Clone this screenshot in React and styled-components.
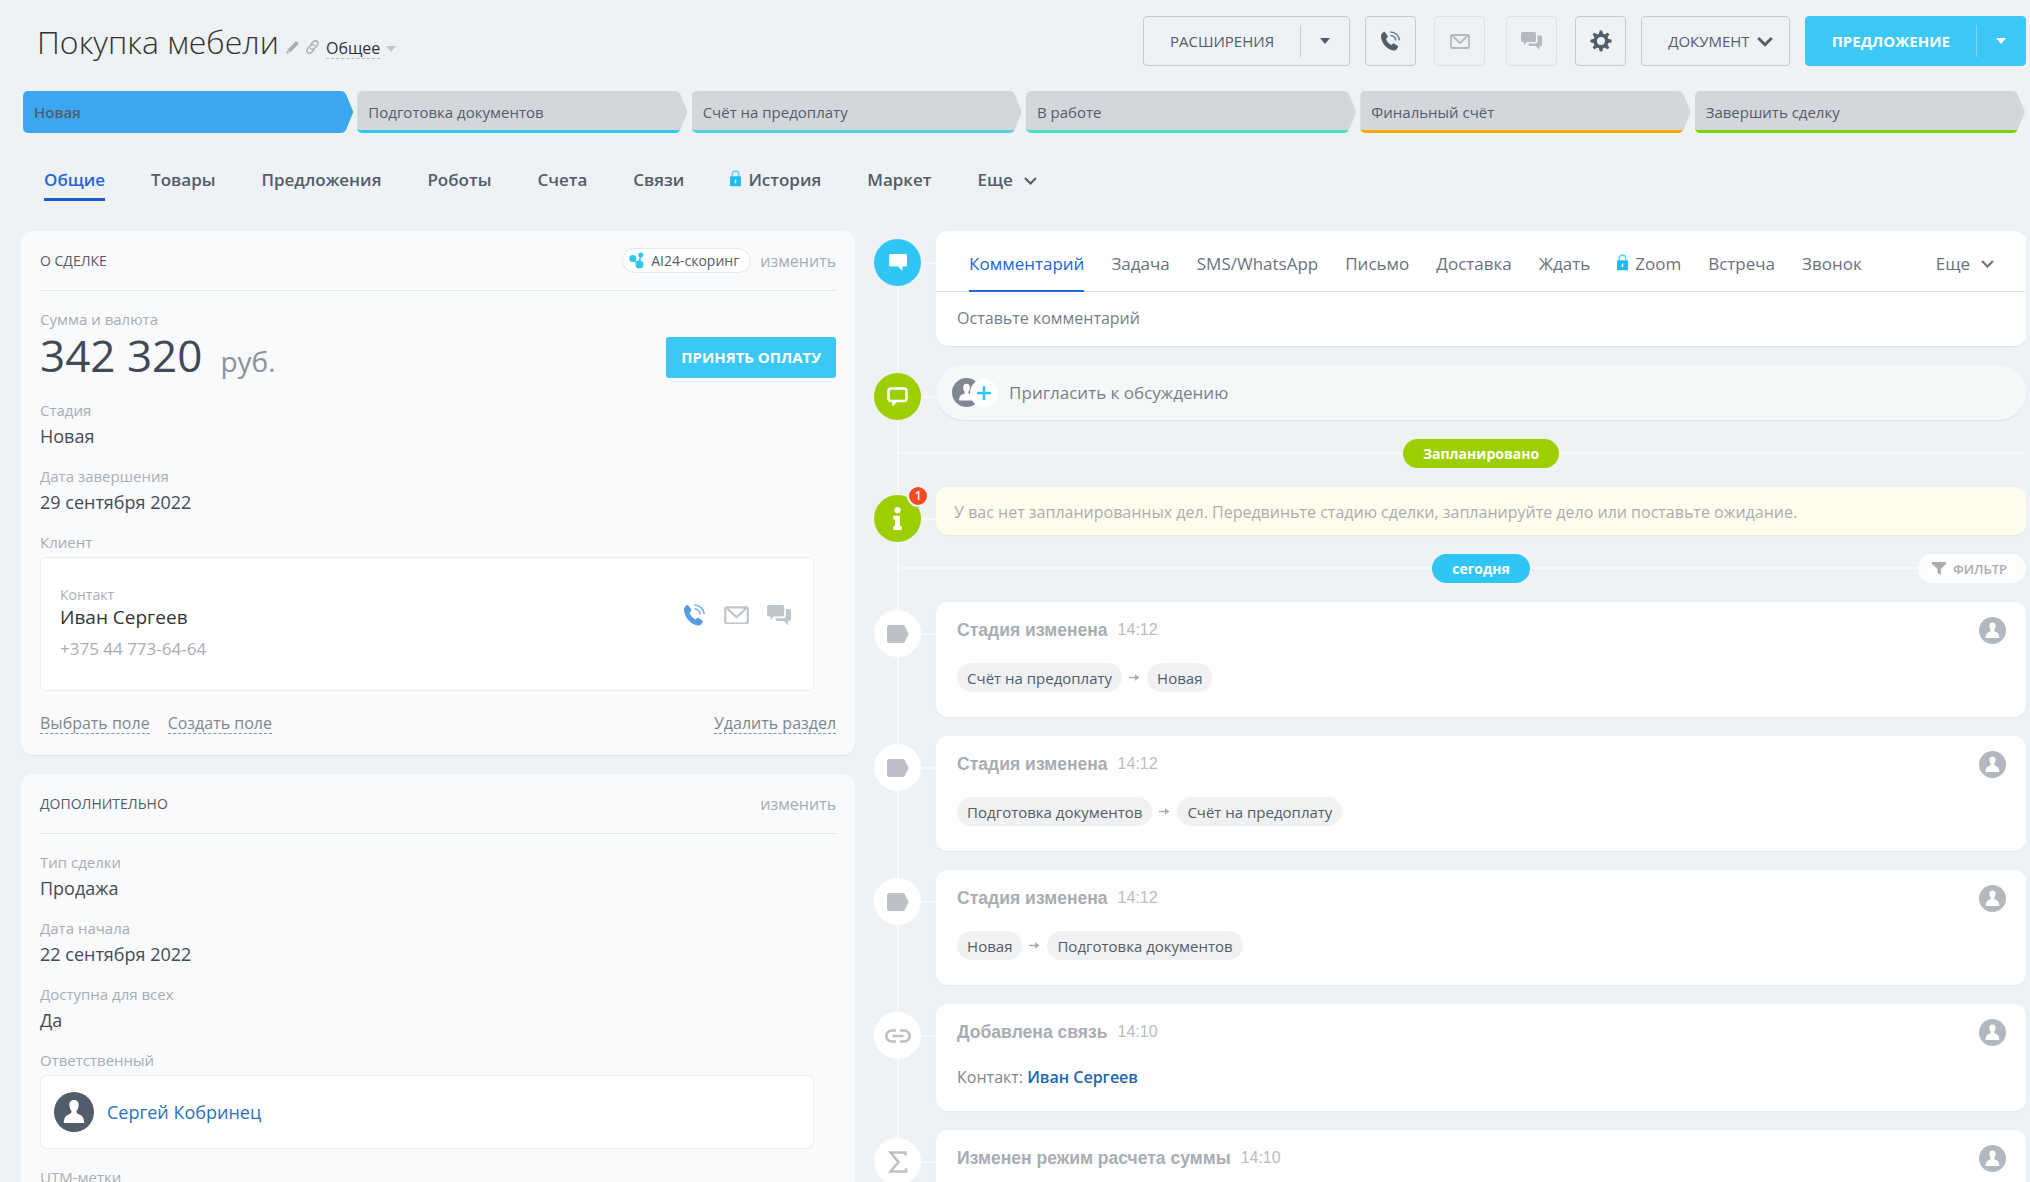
import React from 'react';
import styled, { createGlobalStyle, css } from 'styled-components';
import { FaInfo } from 'react-icons/fa';

const GlobalStyle = createGlobalStyle`
    * {
        box-sizing: border-box;
    }
    body {
        margin: 0;
        background: #eef2f4;
        color: #535c69;
        font-family: "Open Sans", "Noto Sans", sans-serif;
    }
    button, input {
        margin: 0;
        padding: 0;
        border: 0;
        background: none;
        font-family: inherit;
        color: inherit;
    }
    button {
        cursor: pointer;
    }
    a {
        color: inherit;
        text-decoration: none;
    }
    h1, h2, h3, p, ol, ul, dl, dd {
        margin: 0;
        padding: 0;
        list-style: none;
        font-weight: inherit;
    }
    svg {
        display: block;
        flex: none;
    }
`

const Page = styled.div`
    height: 100vh;
    overflow: hidden;
    padding: 16px 4px 0 21px;
`

/* header */

const Header = styled.header`
    display: flex;
    align-items: center;
    justify-content: space-between;
    height: 50px;
`

const TitleRow = styled.div`
    display: flex;
    align-items: baseline;
    gap: 7px;
    padding: 2px 0 0 16px;
`

const Title = styled.h1`
    font-size: 32px;
    line-height: 44px;
    font-weight: 300;
    color: #333;
`

const CategoryButton = styled.button`
    display: flex;
    align-items: center;
    gap: 6px;
    font-size: 16px;
    line-height: 20px;
    color: #333;
    & > span {
        border-bottom: 1px dashed #b5bac0;
    }
`

const Toolbar = styled.div`
    display: flex;
    gap: 15px;
`

const Button = styled.button`
    display: flex;
    align-items: center;
    justify-content: center;
    height: 50px;
    border: 1px solid #c6cbd0;
    border-radius: 4px;
    font-size: 15px;
    font-weight: 500;
    ${({ $primary }) => $primary && css`
        border-color: #3bc8f5;
        background: #3bc8f5;
        color: #fff;
        font-weight: 700;
    `}
    ${({ $wide }) => $wide && css`
        gap: 7px;
        padding: 0 16px 0 26px;
    `}
`

const IconButton = styled(Button)`
    width: 51px;
    &:disabled {
        margin: 0 3px;
        border-color: #dde1e4;
        color: #b5bac0;
    }
`

const SplitLabel = styled.span`
    padding: 0 26px;
`

const SplitArrow = styled.span`
    display: flex;
    align-items: center;
    justify-content: center;
    width: 49px;
    height: 32px;
    border-left: 1px solid ${({ $light }) => ($light ? '#7cdaf8' : '#c6cbd0')};
`

/* stages */

const Stages = styled.ol`
    display: grid;
    grid-template-columns: repeat(6, 1fr);
    gap: 4px;
    margin-top: 25px;
    padding: 0 1px 0 2px;
`

const Stage = styled.button`
    width: 100%;
    height: 42px;
    padding: 2px 11px 0;
    border-bottom: 3px solid ${({ $color }) => $color};
    border-radius: 5px 0 0 5px;
    background: ${({ $active, $color }) => ($active ? $color : '#d3d7dc')};
    clip-path: polygon(0 0, calc(100% - 12px) 0, calc(100% - 9px) 1px, calc(100% - 7px) 4px, 100% 50%, calc(100% - 7px) 38px, calc(100% - 9px) 41px, calc(100% - 12px) 100%, 0 100%);
    font-size: 15px;
    font-weight: ${({ $active }) => ($active ? 600 : 500)};
    text-align: left;
`

/* page tabs */

const Tabs = styled.nav`
    display: flex;
    gap: 46px;
    margin: 35px 0 30px;
    padding-left: 23px;
`

const Tab = styled.a`
    display: flex;
    align-items: center;
    gap: ${({ $more }) => ($more ? 11 : 7)}px;
    padding-bottom: 6px;
    border-bottom: 3px solid ${({ $active }) => ($active ? '#1b5ccd' : 'transparent')};
    color: ${({ $active }) => ($active ? '#2067d9' : '#535c69')};
    font-size: 17px;
    line-height: 24px;
    font-weight: 600;
`

const Columns = styled.main`
    display: grid;
    grid-template-columns: 42fr 58fr;
    gap: 19px;
    align-items: start;
`

const Sections = styled.div`
    display: flex;
    flex-direction: column;
    gap: 19px;
`

/* deal sections */

const Section = styled.section`
    padding: 0 19px 21px;
    border-radius: 12px;
    background: #f9fafc;
    box-shadow: 0 1px 1px rgba(83, 92, 105, .08);
`

const SectionHead = styled.div`
    display: flex;
    align-items: center;
    gap: 9px;
    height: 60px;
    border-bottom: 1px solid #e2e5e8;
`

const SectionTitle = styled.h2`
    flex: 1;
    font-size: 14px;
    font-weight: 500;
`

const EditButton = styled.button`
    font-size: 16px;
    line-height: 20px;
    color: #a8adb4;
`

const Scoring = styled.a`
    display: flex;
    align-items: center;
    gap: 7px;
    height: 25px;
    padding: 0 11px 0 6px;
    border: 1px solid #e4e7ea;
    border-radius: 13px;
    background: #fff;
    font-size: 14px;
    font-weight: 500;
`

const Fields = styled.dl`
    display: flex;
    flex-direction: column;
    gap: 18px;
    padding-top: 18px;
`

const Field = styled.div`
    display: flex;
    flex-direction: column;
    gap: 4px;
`

const FieldLabel = styled.dt`
    font-size: ${({ $small }) => ($small ? 14 : 15)}px;
    line-height: 20px;
    color: #a8adb4;
`

const FieldValue = styled.dd`
    font-size: 18px;
    line-height: 24px;
    color: #444b57;
`

const SumRow = styled.dd`
    display: flex;
    align-items: center;
    justify-content: space-between;
    height: 49px;
`

const Sum = styled.span`
    font-size: 44px;
    line-height: 48px;
    color: #414955;
    & > small {
        margin-left: 18px;
        font-size: 28px;
        color: #8b929b;
    }
`

const PayButton = styled.button`
    height: 41px;
    padding: 0 15px 2px;
    border-radius: 3px;
    background: #3bc8f5;
    color: #fff;
    font-size: 15px;
    font-weight: 700;
`

const Box = styled.dd`
    display: flex;
    align-items: center;
    margin: 1px 22px 0 0;
    border: 1px solid #e9edef;
    border-radius: 6px;
    background: #fff;
`

const ContactBox = styled(Box)`
    justify-content: space-between;
    padding: 27px 22px 31px 19px;
`

const ContactActions = styled.div`
    display: flex;
    align-items: center;
    gap: 18px;
    margin-bottom: 14px;
    color: #c0c5ca;
`

const CallButton = styled.button`
    color: #569de0;
`

const ContactName = styled.a`
    display: block;
    font-size: 19px;
    line-height: 24px;
    color: #333;
`

const Phone = styled.p`
    margin-top: 10px;
    font-size: 17px;
    line-height: 20px;
    font-weight: 500;
    color: #a8adb4;
`

const UserBox = styled(Box)`
    gap: 13px;
    padding: 16px 13px;
    font-size: 18px;
    color: #2a72bd;
`

const SectionLinks = styled.div`
    display: flex;
    gap: 18px;
    margin-top: 22px;
`

const DashedButton = styled.button`
    border-bottom: 1px dashed #8b929b;
    font-size: 16px;
    line-height: 20px;
    color: #80868e;
    &:last-child {
        margin-left: auto;
    }
`

/* timeline */

const Timeline = styled.div`
    display: flex;
    flex-direction: column;
    gap: 19px;
    background: linear-gradient(#f7f9fa, #f7f9fa) 23px 10px / 2px 100% no-repeat;
`

const Entry = styled.div`
    display: grid;
    grid-template-columns: 47px 1fr;
    gap: 15px;
    align-items: start;
    background: linear-gradient(#f7f9fa, #f7f9fa) 24px 31px / 46px 2px no-repeat;
`

const Marker = styled.div`
    position: relative;
    display: flex;
    align-items: center;
    justify-content: center;
    height: 47px;
    margin: 8px 0 -8px;
    border-radius: 50%;
    background: ${({ $color }) => $color || '#fff'};
    color: ${({ $color }) => ($color ? '#fff' : '#bcc0c7')};
`

const Counter = styled.span`
    position: absolute;
    top: -10px;
    right: -8px;
    width: 22px;
    height: 22px;
    border: 2px solid #eef2f4;
    border-radius: 50%;
    background: #fb4b1e;
    color: #fff;
    font-size: 12px;
    line-height: 18px;
    font-weight: 600;
    text-align: center;
`

const Divider = styled.div`
    display: grid;
    grid-template-columns: 1fr auto 1fr;
    align-items: center;
    padding-left: 62px;
    background: linear-gradient(#f7f9fa, #f7f9fa) 24px 13px / 100% 2px no-repeat;
`

const Pill = styled.span`
    grid-column: 2;
    height: 29px;
    padding: 0 20px;
    border-radius: 15px;
    background: ${({ $color }) => $color};
    color: #fff;
    font-size: 14px;
    line-height: 30px;
    font-weight: 700;
`

const FilterButton = styled.button`
    justify-self: end;
    display: flex;
    align-items: center;
    gap: 7px;
    height: 29px;
    padding: 0 19px 0 14px;
    border-radius: 15px;
    background: #fdfdfe;
    color: #a8adb4;
    font-size: 13px;
    font-weight: 600;
`

const Card = styled.article`
    padding: 16px 20px 22px 21px;
    border-radius: 12px;
    background: #fefefe;
    box-shadow: 0 1px 1px rgba(83, 92, 105, .06);
`

const CardHead = styled.div`
    display: flex;
    align-items: center;
    gap: 10px;
    height: 24px;
    margin-bottom: 21px;
    font-family: "Liberation Sans", Arial, sans-serif;
    font-size: 15px;
    color: #a8adb4;
    & > h3 {
        font-weight: 700;
    }
    & > time {
        font-size: 16px;
        color: #b9bdc3;
    }
    & > svg {
        margin-left: auto;
    }
`

const Chips = styled.div`
    display: flex;
    align-items: center;
    gap: 7px;
    padding-bottom: 3px;
    color: #a8adb4;
`

const Chip = styled.span`
    height: 29px;
    padding: 0 10px;
    border-radius: 15px;
    background: #f0f1f2;
    color: #535c69;
    font-size: 15px;
    line-height: 30px;
`

const Relation = styled.p`
    font-size: 16px;
    line-height: 24px;
    color: #80868e;
    & > a {
        color: #2066b0;
        font-weight: 600;
    }
`

const Editor = styled.form`
    border-radius: 12px;
    background: #fff;
    box-shadow: 0 1px 1px rgba(83, 92, 105, .08);
`

const EditorTabs = styled.div`
    display: flex;
    gap: 27px;
    height: 61px;
    padding: 6px 32px 0 33px;
    border-bottom: 1px solid #e2e5e8;
`

const EditorTab = styled.a`
    display: flex;
    align-items: center;
    gap: ${({ $more }) => ($more ? 11 : 7)}px;
    height: 55px;
    border-bottom: 2px solid ${({ $active }) => ($active ? '#2067d9' : 'transparent')};
    color: ${({ $active }) => ($active ? '#2067d9' : '#6a727d')};
    font-size: 17px;
    margin-left: ${({ $more }) => ($more ? 'auto' : 0)};
`

const CommentInput = styled.input`
    display: block;
    width: 100%;
    height: 54px;
    padding: 0 21px 2px;
    font-size: 16px;
    &::placeholder {
        color: #777d85;
        opacity: 1;
    }
`

const Invite = styled.button`
    display: flex;
    align-items: center;
    gap: 11px;
    height: 55px;
    padding: 0 16px;
    border-radius: 28px;
    background: #f5f8f9;
    box-shadow: 0 1px 1px rgba(83, 92, 105, .1);
    color: #7a8089;
    font-size: 17px;
`

const InviteIcons = styled.span`
    display: flex;
    align-items: center;
`

const Plus = styled.span`
    display: flex;
    align-items: center;
    justify-content: center;
    width: 28px;
    height: 28px;
    margin-left: -11px;
    border-radius: 50%;
    background: #fff;
`

const Notice = styled.p`
    height: 48px;
    padding: 0 18px;
    border-radius: 12px;
    background: #fffdeb;
    box-shadow: 0 1px 1px rgba(83, 92, 105, .06);
    color: #a8adb4;
    font-size: 16px;
    line-height: 50px;
`

/* icons */

const Caret = ({ color = 'currentColor', width = 10 }) => (
    <svg width={width} height="6" viewBox="0 0 10 6">
        <path d="M0 0h10L5 6z" fill={color} />
    </svg>
)

const Chevron = ({ size = 13, stroke = 2 }) => (
    <svg width={size} height={size} viewBox="0 0 13 13" fill="none" stroke="currentColor" strokeWidth={stroke}>
        <path d="M1 4l5.500 5.500L12 4" />
    </svg>
)

const PencilIcon = () => (
    <svg width="13" height="13" viewBox="0 0 13 13" fill="#a8adb4">
        <path d="M9.600.6a1 1 0 0 1 1.400 0l1.300 1.300a1 1 0 0 1 0 1.400L4.200 11.400 1.500 8.700zM1 9.600l2.300 2.300L.2 12.800z" />
    </svg>
)

const LinkIcon = () => (
    <svg width="13" height="14" viewBox="0 0 13 14" fill="none" stroke="#a8adb4" strokeWidth="1.400" strokeLinecap="round">
        <path d="M5 4.200l2.500-2.600a2.600 2.600 0 0 1 3.800 3.800L8.200 8.600a2.600 2.600 0 0 1-3.700 0" />
        <path d="M8 9.800l-2.500 2.600a2.600 2.600 0 0 1-3.800-3.800L4.800 5.400a2.600 2.600 0 0 1 3.700 0" />
    </svg>
)

const PhoneIcon = ({ size = 20 }) => (
    <svg width={size} height={size} viewBox="0 0 20 20">
        <path d="M4 1.300l2.500 3.500q.5.900-.2 1.700L5 8c.9 2.500 2.600 4.600 5.300 6l1.600-1.200q.8-.5 1.600 0l3.200 2.200q.8.700.2 1.600l-1.700 2.200q-1 1-2.600.7C6 18.600.8 12.800 0 5.500q-.1-1.500.7-2.500L2.200 1.200q1-.8 1.800.1z" fill="currentColor" />
        <path d="M9.300.9A9 9 0 0 1 18.400 9.200M9.500 4.400a5.500 5.500 0 0 1 5.300 5" fill="none" stroke="currentColor" strokeWidth="1.500" opacity=".8" />
    </svg>
)

const LockIcon = () => (
    <svg width="11" height="20" viewBox="0 0 12 22">
        <path d="M2.500 8V4.500a3.500 3.500 0 0 1 7 0V8" fill="none" stroke="#5fd0f6" strokeWidth="1.600" />
        <rect y="7" width="12" height="11" rx="1" fill="#22b9ee" />
        <path d="M6 10.500v4" stroke="#fff" strokeWidth="1.500" />
    </svg>
)

const MailIcon = ({ width = 20 }) => (
    <svg width={width} height={width * 0.75} viewBox="0 0 20 15" fill="none" stroke="currentColor" strokeWidth="1.800">
        <rect x="1" y="1" width="18" height="13" rx="1.500" />
        <path d="M2.500 2l7.500 7 7.500-7" />
    </svg>
)

const ChatIcon = ({ width = 21 }) => (
    <svg width={width} height={width * 0.86} viewBox="0 0 21 18" fill="currentColor">
        <path d="M1.500 0h12A1.500 1.500 0 0 1 15 1.500v7a1.500 1.500 0 0 1-1.500 1.500H5.800L3 13.200V10H1.500A1.500 1.500 0 0 1 0 8.500v-7A1.500 1.500 0 0 1 1.500 0z" />
        <path d="M16.500 3.500h3A1.500 1.500 0 0 1 21 5v7.500a1.500 1.500 0 0 1-1.500 1.500h-1v4l-3.600-4H9a1.500 1.500 0 0 1-1.500-1.500v-1h7a2 2 0 0 0 2-2z" />
    </svg>
)

const GearIcon = () => (
    <svg width="22" height="22" viewBox="-11 -11 22 22" fill="none" stroke="currentColor">
        <circle r="5.800" strokeWidth="3.600" />
        {[0, 45, 90, 135, 180, 225, 270, 315].map(angle => (
            <path key={angle} d="M-2.200-7L-1.200-10.600h2.400L2.200-7z" fill="currentColor" stroke="none" transform={`rotate(${angle})`} />
        ))}
    </svg>
)

const ScoringIcon = () => (
    <svg width="15" height="17" viewBox="0 0 15 17" fill="#2fc6f6">
        <path d="M4 7l6 6M11.500 4l-1.500 8" stroke="#2fc6f6" strokeWidth="1.500" />
        <circle cx="3.800" cy="6.500" r="3.500" />
        <circle cx="11.800" cy="3" r="2.500" />
        <circle cx="10.500" cy="12.500" r="4" />
    </svg>
)

const UserIcon = ({ size, color }) => (
    <svg width={size} height={size} viewBox="0 0 40 40">
        <circle cx="20" cy="20" r="20" fill={color} />
        <path d="M20 8c3.500 0 4.800 2.400 4.600 5.400-.1 2.200-.9 4.200-2 5.400-.3 1.700.2 2.600 1.600 3.100 3.900 1.500 5.600 2.700 6 9.100H9.800c.4-6.400 2.100-7.600 6-9.100 1.400-.5 1.900-1.400 1.600-3.100-1.100-1.200-1.900-3.200-2-5.400C15.200 10.400 16.500 8 20 8z" fill="#fff" />
    </svg>
)

const FilterIcon = () => (
    <svg width="14" height="13" viewBox="0 0 14 13" fill="currentColor">
        <path d="M0 0h14v2L8.800 7v6L5.500 11V7L0 2z" />
    </svg>
)

const ArrowIcon = () => (
    <svg width="11" height="9" viewBox="0 0 11 9">
        <path d="M0 4.500h7" stroke="currentColor" strokeWidth="1.400" />
        <path d="M6 1.200l4.500 3.300L6 7.800z" fill="currentColor" />
    </svg>
)

const markerIcons = {
    comment: (
        <svg width="18" height="17" viewBox="0 0 18 17" fill="currentColor">
            <path d="M1.500 0h15A1.500 1.500 0 0 1 18 1.500v9.500a1.500 1.500 0 0 1-1.500 1.500H13.500V17L9 12.500H1.500A1.500 1.500 0 0 1 0 11V1.500A1.500 1.500 0 0 1 1.500 0z" />
        </svg>
    ),
    chat: (
        <svg width="21" height="20" viewBox="0 0 21 20">
            <rect x="1.500" y="1.500" width="18" height="12.500" rx="2.500" fill="none" stroke="currentColor" strokeWidth="2.600" />
            <path d="M5 14h6l-5.500 5.500z" fill="currentColor" />
        </svg>
    ),
    info: <FaInfo size="23" />,
    stage: (
        <svg width="22" height="18" viewBox="0 0 22 18" fill="currentColor">
            <path d="M2.500 0h13c1 0 1.800.4 2.400 1.200L21.200 8a2 2 0 0 1 0 2L17.900 16.800c-.6.8-1.400 1.200-2.400 1.200H2.500A2.500 2.500 0 0 1 0 15.500v-13A2.500 2.500 0 0 1 2.500 0z" />
        </svg>
    ),
    link: (
        <svg width="26" height="14" viewBox="0 0 26 14" fill="none" stroke="currentColor" strokeWidth="2.600">
            <path d="M11 1.500H6.800a5.500 5.500 0 0 0 0 11H11M15 1.500h4.200a5.500 5.500 0 0 1 0 11H15M7.500 7h11" />
        </svg>
    ),
    sum: (
        <svg width="20" height="22" viewBox="0 0 20 22" fill="none" stroke="currentColor" strokeWidth="2.600">
            <path d="M17.500 4.500V1.500H2.500l8 9.500-8 9.500h15.500v-3" />
        </svg>
    ),
}

/* data */

const stages = [
    { name: 'Новая', color: '#3aa7f0', active: true },
    { name: 'Подготовка документов', color: '#2fc6f6' },
    { name: 'Счёт на предоплату', color: '#55d0e0' },
    { name: 'В работе', color: '#47e4c2' },
    { name: 'Финальный счёт', color: '#ffa900' },
    { name: 'Завершить сделку', color: '#7bd500' },
]

const tabs = ['Общие', 'Товары', 'Предложения', 'Роботы', 'Счета', 'Связи', 'История', 'Маркет']

const editorTabs = ['Комментарий', 'Задача', 'SMS/WhatsApp', 'Письмо', 'Доставка', 'Ждать', 'Zoom', 'Встреча', 'Звонок']

const history = [
    { icon: 'stage', title: 'Стадия изменена', time: '14:12', from: 'Счёт на предоплату', to: 'Новая' },
    { icon: 'stage', title: 'Стадия изменена', time: '14:12', from: 'Подготовка документов', to: 'Счёт на предоплату' },
    { icon: 'stage', title: 'Стадия изменена', time: '14:12', from: 'Новая', to: 'Подготовка документов' },
    { icon: 'link', title: 'Добавлена связь', time: '14:10', contact: 'Иван Сергеев' },
    { icon: 'sum', title: 'Изменен режим расчета суммы', time: '14:10' },
]

const TextField = ({ label, value }) => (
    <Field>
        <FieldLabel>{label}</FieldLabel>
        {value && <FieldValue>{value}</FieldValue>}
    </Field>
)

const DealHeader = () => (
    <Header>
        <TitleRow>
            <Title>Покупка мебели</Title>
            <button aria-label="Переименовать"><PencilIcon /></button>
            <button aria-label="Скопировать ссылку"><LinkIcon /></button>
            <CategoryButton>
                <span>Общее</span>
                <Caret color="#c3c8cc" />
            </CategoryButton>
        </TitleRow>
        <Toolbar>
            <Button>
                <SplitLabel>РАСШИРЕНИЯ</SplitLabel>
                <SplitArrow><Caret /></SplitArrow>
            </Button>
            <IconButton aria-label="Позвонить"><PhoneIcon /></IconButton>
            <IconButton aria-label="Написать письмо" disabled><MailIcon /></IconButton>
            <IconButton aria-label="Открыть чат" disabled><ChatIcon /></IconButton>
            <IconButton aria-label="Настройки"><GearIcon /></IconButton>
            <Button $wide>
                ДОКУМЕНТ
                <Chevron size={16} stroke={2.4} />
            </Button>
            <Button $primary>
                <SplitLabel>ПРЕДЛОЖЕНИЕ</SplitLabel>
                <SplitArrow $light><Caret /></SplitArrow>
            </Button>
        </Toolbar>
    </Header>
)

const AboutSection = () => (
    <Section>
        <SectionHead>
            <SectionTitle>О СДЕЛКЕ</SectionTitle>
            <Scoring href="#scoring">
                <ScoringIcon />
                AI24-скоринг
            </Scoring>
            <EditButton>изменить</EditButton>
        </SectionHead>
        <Fields>
            <Field>
                <FieldLabel>Сумма и валюта</FieldLabel>
                <SumRow>
                    <Sum>342 320<small>руб.</small></Sum>
                    <PayButton>ПРИНЯТЬ ОПЛАТУ</PayButton>
                </SumRow>
            </Field>
            <TextField label="Стадия" value="Новая" />
            <TextField label="Дата завершения" value="29 сентября 2022" />
            <Field>
                <FieldLabel>Клиент</FieldLabel>
                <ContactBox>
                    <div>
                        <FieldLabel as="p" $small>Контакт</FieldLabel>
                        <ContactName href="#contact">Иван Сергеев</ContactName>
                        <Phone>+375 44 773-64-64</Phone>
                    </div>
                    <ContactActions>
                        <CallButton aria-label="Позвонить"><PhoneIcon size={22} /></CallButton>
                        <button aria-label="Письмо"><MailIcon width={25} /></button>
                        <button aria-label="Чат"><ChatIcon width={24} /></button>
                    </ContactActions>
                </ContactBox>
            </Field>
        </Fields>
        <SectionLinks>
            <DashedButton>Выбрать поле</DashedButton>
            <DashedButton>Создать поле</DashedButton>
            <DashedButton>Удалить раздел</DashedButton>
        </SectionLinks>
    </Section>
)

const ExtraSection = () => (
    <Section>
        <SectionHead>
            <SectionTitle>ДОПОЛНИТЕЛЬНО</SectionTitle>
            <EditButton>изменить</EditButton>
        </SectionHead>
        <Fields>
            <TextField label="Тип сделки" value="Продажа" />
            <TextField label="Дата начала" value="22 сентября 2022" />
            <TextField label="Доступна для всех" value="Да" />
            <Field>
                <FieldLabel>Ответственный</FieldLabel>
                <UserBox>
                    <UserIcon size={40} color="#535c69" />
                    <a href="#user">Сергей Кобринец</a>
                </UserBox>
            </Field>
            <TextField label="UTM-метки" />
        </Fields>
    </Section>
)

const HistoryEntry = ({ icon, title, time, from, to, contact }) => (
    <Entry>
        <Marker>{markerIcons[icon]}</Marker>
        <Card>
            <CardHead>
                <h3>{title}</h3>
                <time>{time}</time>
                <UserIcon size={27} color="#b3b8bf" />
            </CardHead>
            {contact && <Relation>Контакт: <a href="#contact">{contact}</a></Relation>}
            {from && (
                <Chips>
                    <Chip>{from}</Chip>
                    <ArrowIcon />
                    <Chip>{to}</Chip>
                </Chips>
            )}
        </Card>
    </Entry>
)

const DealTimeline = () => (
    <Timeline>
        <Entry>
            <Marker $color="#2fc6f6">{markerIcons.comment}</Marker>
            <Editor>
                <EditorTabs>
                    {editorTabs.map((name, i) => (
                        <EditorTab key={name} href="#editor" $active={i === 0}>
                            {name === 'Zoom' && <LockIcon />}
                            {name}
                        </EditorTab>
                    ))}
                    <EditorTab href="#more" $more>Еще <Chevron /></EditorTab>
                </EditorTabs>
                <CommentInput aria-label="Комментарий" placeholder="Оставьте комментарий" />
            </Editor>
        </Entry>
        <Entry>
            <Marker $color="#9dcf00">{markerIcons.chat}</Marker>
            <Invite>
                <InviteIcons>
                    <UserIcon size={29} color="#7f8792" />
                    <Plus>
                        <svg width="14" height="14" viewBox="0 0 14 14" stroke="#2fc6f6" strokeWidth="2.400">
                            <path d="M7 0v14M0 7h14" />
                        </svg>
                    </Plus>
                </InviteIcons>
                Пригласить к обсуждению
            </Invite>
        </Entry>
        <Divider>
            <Pill $color="#9dcf00">Запланировано</Pill>
        </Divider>
        <Entry>
            <Marker $color="#9dcf00">
                {markerIcons.info}
                <Counter>1</Counter>
            </Marker>
            <Notice>У вас нет запланированных дел. Передвиньте стадию сделки, запланируйте дело или поставьте ожидание.</Notice>
        </Entry>
        <Divider>
            <Pill $color="#2fc6f6">сегодня</Pill>
            <FilterButton><FilterIcon />ФИЛЬТР</FilterButton>
        </Divider>
        {history.map((item, i) => <HistoryEntry key={i} {...item} />)}
    </Timeline>
)

const App = () => (
    <Page>
        <GlobalStyle />
        <DealHeader />
        <Stages>
            {stages.map(({ name, color, active }) => (
                <li key={name}>
                    <Stage $color={color} $active={active}>{name}</Stage>
                </li>
            ))}
        </Stages>
        <Tabs>
            {tabs.map((name, i) => (
                <Tab key={name} href="#tab" $active={i === 0}>
                    {name === 'История' && <LockIcon />}
                    {name}
                </Tab>
            ))}
            <Tab href="#more" $more>Еще <Chevron /></Tab>
        </Tabs>
        <Columns>
            <Sections>
                <AboutSection />
                <ExtraSection />
            </Sections>
            <DealTimeline />
        </Columns>
    </Page>
)

export default App
